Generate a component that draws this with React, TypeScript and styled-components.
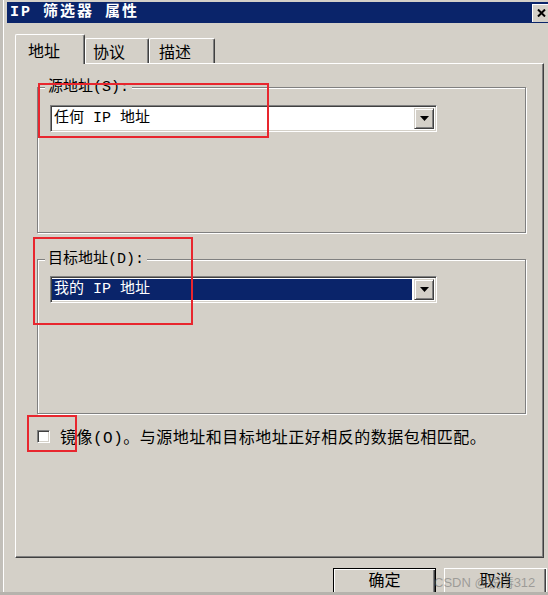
import styled, { createGlobalStyle } from "styled-components";

const GlobalStyle = createGlobalStyle`
  html, body {
    margin: 0;
    padding: 0;
    background: #d4d0c8;
  }
  body {
    font-family: "Liberation Mono", "Noto Sans CJK SC", monospace;
    color: #000;
  }
`;

const tabs = [
  { label: "地址", w: 70, pad: 12, active: true },
  { label: "协议", w: 64, pad: 7 },
  { label: "描述", w: 66, pad: 9 },
];

function ArrowDown() {
  return (
    <svg width="9" height="5" viewBox="0 0 9 5">
      <path d="M0 0h9L4.5 5z" fill="#000" />
    </svg>
  );
}

function Combo({ value, selected }: { value: string; selected?: boolean }) {
  return (
    <ComboBox>
      <ComboField $selected={selected}>{value}</ComboField>
      <DropButton>
        <ArrowDown />
      </DropButton>
    </ComboBox>
  );
}

function App() {
  return (
    <>
      <GlobalStyle />
      <Window>
        <TitleBar>
          <Title>IP 筛选器 属性</Title>
          <CloseButton>
            <svg width="9" height="8" viewBox="0 0 9 8">
              <path d="M1 0.5l7 7M8 0.5l-7 7" stroke="#000" strokeWidth="2" />
            </svg>
          </CloseButton>
        </TitleBar>
        <Body>
          <TabRow>
            {tabs.map((t) => (
              <Tab key={t.label} $w={t.w} $pad={t.pad} $active={t.active}>
                {t.label}
              </Tab>
            ))}
          </TabRow>
          <Panel>
            <GroupBox $h={146} $pt={17}>
              <Legend $top={-8}>源地址(S):</Legend>
              <Combo value="任何 IP 地址" />
            </GroupBox>
            <GroupBox $h={155} $pt={16} $mt={26}>
              <Legend $top={-8}>目标地址(D):</Legend>
              <Combo value="我的 IP 地址" selected />
            </GroupBox>
            <CheckRow>
              <CheckBox />
              <span>镜像(O)。与源地址和目标地址正好相反的数据包相匹配。</span>
            </CheckRow>
          </Panel>
          <Footer>
            <DialogButton $default>确定</DialogButton>
            <DialogButton>取消</DialogButton>
          </Footer>
        </Body>
        <BottomEdge />
        <Watermark>CSDN @锐涛312</Watermark>
        <Mark style={{ left: 38, top: 83, width: 231, height: 55 }} />
        <Mark style={{ left: 33, top: 237, width: 160, height: 88 }} />
        <Mark style={{ left: 27, top: 415, width: 50, height: 37 }} />
      </Window>
    </>
  );
}

export default App;

const Window = styled.div`
  position: relative;
  width: 548px;
  height: 595px;
  overflow: hidden;
  background: #d4d0c8;
  box-shadow: inset 3px 0 0 #c2bfb9, inset 4px 0 0 #ffffff;
  display: flex;
  flex-direction: column;
`;

const TitleBar = styled.div`
  margin: 2px 0 0 7px;
  height: 21px;
  background: #0a246a;
  display: flex;
  align-items: center;
  padding-left: 3px;
`;

const Title = styled.div`
  color: #fff;
  font-weight: bold;
  font-size: 15px;
  letter-spacing: 2px;
  line-height: 21px;
`;

const CloseButton = styled.div`
  margin-left: auto;
  width: 16px;
  height: 18px;
  box-sizing: border-box;
  background: #d4d0c8;
  border-top: 1px solid #fff;
  border-left: 1px solid #fff;
  display: flex;
  align-items: center;
  padding-left: 4px;
`;

const Body = styled.div`
  flex: 1;
  padding: 11px 0 0 15px;
  overflow: hidden;
`;

const TabRow = styled.div`
  display: flex;
  align-items: flex-end;
  height: 29px;
`;

const Tab = styled.div<{ $w: number; $pad: number; $active?: boolean }>`
  position: relative;
  z-index: ${(p) => (p.$active ? 2 : 1)};
  width: ${(p) => p.$w}px;
  height: ${(p) => (p.$active ? 30 : 25)}px;
  margin-bottom: ${(p) => (p.$active ? -1 : 0)}px;
  box-sizing: border-box;
  padding-left: ${(p) => p.$pad}px;
  background: #d4d0c8;
  border-top: 1px solid #fff;
  border-left: 1px solid #fff;
  border-right: 1px solid #404040;
  box-shadow: inset -1px 0 0 #808080;
  border-radius: 2px 2px 0 0;
  display: flex;
  align-items: center;
  font-size: 16px;
`;

const Panel = styled.div`
  width: 529px;
  height: 495px;
  box-sizing: border-box;
  border-top: 1px solid #fff;
  border-left: 1px solid #fff;
  border-right: 1px solid #404040;
  border-bottom: 1px solid #404040;
  box-shadow: inset -1px -1px 0 #808080;
  padding: 23px 17px 0 21px;
`;

const GroupBox = styled.div<{ $h: number; $pt: number; $mt?: number }>`
  position: relative;
  height: ${(p) => p.$h}px;
  margin-top: ${(p) => p.$mt ?? 0}px;
  box-sizing: border-box;
  border: 1px solid #808080;
  box-shadow: 1px 1px 0 #fff, inset 1px 1px 0 #fff;
  padding: ${(p) => p.$pt}px 0 0 12px;
`;

const Legend = styled.div<{ $top: number }>`
  position: absolute;
  top: ${(p) => p.$top}px;
  left: 7px;
  padding: 0 3px;
  background: #d4d0c8;
  font-size: 15px;
  line-height: 16px;
`;

const ComboBox = styled.div`
  width: 387px;
  height: 27px;
  box-sizing: border-box;
  border-top: 1px solid #808080;
  border-left: 1px solid #808080;
  border-bottom: 1px solid #fff;
  border-right: 1px solid #fff;
  box-shadow: inset 1px 1px 0 #404040, inset -1px -1px 0 #d4d0c8;
  background: #fff;
  padding: 1px 2px 1px 1px;
  display: flex;
  align-items: center;
  gap: 2px;
`;

const ComboField = styled.div<{ $selected?: boolean }>`
  flex: 1;
  height: 21px;
  padding-left: 2px;
  background: ${(p) => (p.$selected ? "#0a246a" : "#fff")};
  color: ${(p) => (p.$selected ? "#fff" : "#000")};
  font-size: 15px;
  line-height: 21px;
`;

const DropButton = styled.div`
  width: 20px;
  height: 21px;
  box-sizing: border-box;
  background: #d4d0c8;
  border-top: 1px solid #d4d0c8;
  border-left: 1px solid #d4d0c8;
  border-right: 1px solid #404040;
  border-bottom: 1px solid #404040;
  box-shadow: inset 1px 1px 0 #fff, inset -1px -1px 0 #808080;
  display: flex;
  align-items: center;
  justify-content: center;
`;

const CheckRow = styled.label`
  display: flex;
  align-items: center;
  gap: 10px;
  height: 18px;
  margin-top: 13px;
  font-size: 16px;
  letter-spacing: 0.5px;
  white-space: nowrap;
`;

const CheckBox = styled.span`
  width: 13px;
  height: 13px;
  box-sizing: border-box;
  background: #fff;
  border-top: 1px solid #808080;
  border-left: 1px solid #808080;
  border-bottom: 1px solid #fff;
  border-right: 1px solid #fff;
  box-shadow: inset 1px 1px 0 #404040, inset -1px -1px 0 #d4d0c8;
`;

const Footer = styled.div`
  display: flex;
  gap: 8px;
  height: 24px;
  margin-top: 10px;
  padding-left: 318px;
  overflow: hidden;
`;

const DialogButton = styled.div<{ $default?: boolean }>`
  flex: none;
  width: 103px;
  height: 27px;
  box-sizing: border-box;
  border: 1px solid ${(p) => (p.$default ? "#000" : "#fff")};
  box-shadow: ${(p) =>
    p.$default
      ? "inset 1px 1px 0 #fff, inset -1px -1px 0 #404040, inset -2px -2px 0 #808080"
      : "inset -1px -1px 0 #404040, inset -2px -2px 0 #808080"};
  background: #d4d0c8;
  display: flex;
  justify-content: center;
  padding-top: 3px;
  font-size: 16px;
  line-height: 20px;
`;

const BottomEdge = styled.div`
  height: 3px;
  background: #b6b3ad;
`;

const Watermark = styled.div`
  position: absolute;
  left: 434px;
  top: 572px;
  font-family: "Liberation Sans", "Noto Sans CJK SC", sans-serif;
  font-size: 13px;
  color: rgba(110, 110, 110, 0.55);
  white-space: nowrap;
`;

const Mark = styled.div`
  position: absolute;
  box-sizing: border-box;
  border: 2px solid #e8262e;
  pointer-events: none;
`;
